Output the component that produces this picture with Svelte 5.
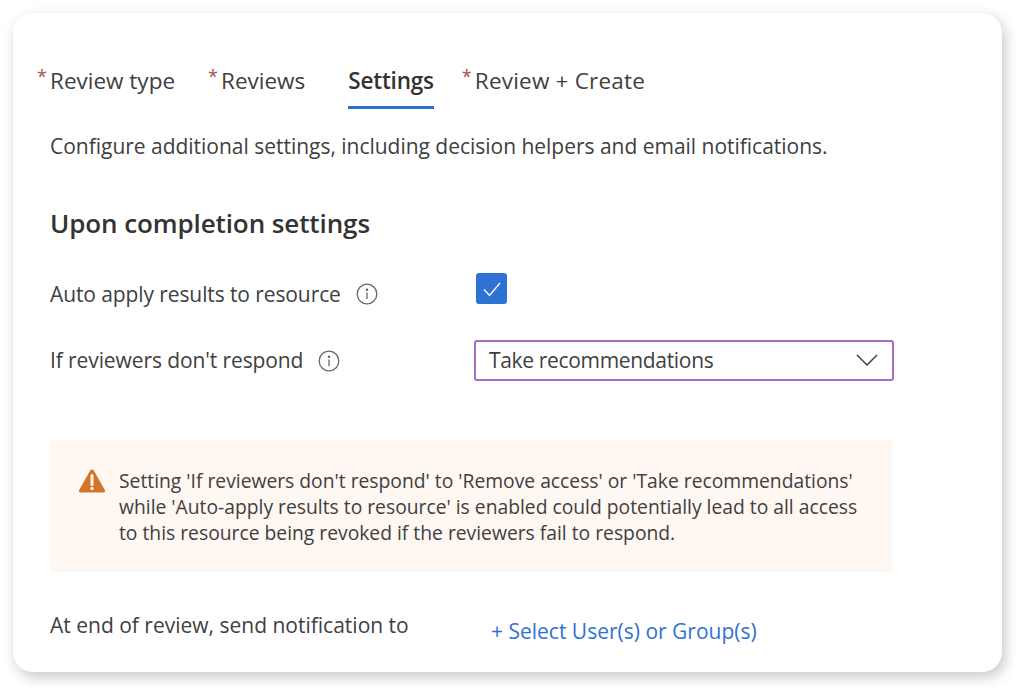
<script>
  const tabs = [
    { label: 'Review type', required: true },
    { label: 'Reviews', required: true },
    { label: 'Settings', active: true },
    { label: 'Review + Create', required: true }
  ];
</script>

<div class="page">
  <div class="card">
    <nav class="tabs">
      {#each tabs as tab}
        <div class="tab" class:active={tab.active} class:required={tab.required}>
          {#if tab.required}<span class="star">*</span>{/if}
          <span class="tab-label">{tab.label}</span>
        </div>
      {/each}
    </nav>

    <p class="intro">Configure additional settings, including decision helpers and email notifications.</p>

    <h2>Upon completion settings</h2>

    <div class="row first">
      <div class="label">
        Auto apply results to resource
        <svg class="info" viewBox="0 0 22 22" width="22" height="22" fill="none" stroke="#666" stroke-width="1.3">
          <circle cx="11" cy="11" r="9.800" />
          <path d="M11 9.500v6.500" />
          <circle cx="11" cy="6.700" r="0.600" fill="#666" />
        </svg>
      </div>
      <div class="checkbox">
        <svg viewBox="0 0 20 20" width="20" height="20" fill="none" stroke="#fff" stroke-width="1.3">
          <path d="M2 10.500l5.500 6L18 4" />
        </svg>
      </div>
    </div>

    <div class="row second">
      <div class="label">
        If reviewers don't respond
        <svg class="info" viewBox="0 0 22 22" width="22" height="22" fill="none" stroke="#666" stroke-width="1.3">
          <circle cx="11" cy="11" r="9.800" />
          <path d="M11 9.500v6.500" />
          <circle cx="11" cy="6.700" r="0.600" fill="#666" />
        </svg>
      </div>
      <div class="select">
        <span>Take recommendations</span>
        <svg viewBox="0 0 22 12" width="22" height="12" fill="none" stroke="#444" stroke-width="1.500">
          <path d="M1 1l10 10L21 1" />
        </svg>
      </div>
    </div>

    <div class="warning">
      <svg viewBox="0 0 28 25" width="28" height="25">
        <path d="M14 1.500c.8 0 1.400.4 1.800 1l11 19.500c.7 1.300 0 2.500-1.500 2.500H2.700c-1.500 0-2.200-1.200-1.500-2.500l11-19.500c.4-.6 1-1 1.800-1z" fill="#d2742a" />
        <path d="M14 7.500v9" stroke="#fff8f2" stroke-width="3" stroke-linecap="round" />
        <circle cx="14" cy="20.500" r="1.700" fill="#fff8f2" />
      </svg>
      <p>Setting 'If reviewers don't respond' to 'Remove access' or 'Take recommendations' while 'Auto-apply results to resource' is enabled could potentially lead to all access to this resource being revoked if the reviewers fail to respond.</p>
    </div>

    <div class="row last">
      <div class="label end">At end of review, send notification to</div>
      <a class="link" href="#top">+ Select User(s) or Group(s)</a>
    </div>
  </div>
</div>

<style>
  :global(body) {
    margin: 0;
    background: #fff;
  }

  .page {
    padding: 13px 22px 23px 13px;
    height: 695px;
    box-sizing: border-box;
    font-family: "Open Sans", "Noto Sans", sans-serif;
    color: #404040;
  }

  .card {
    height: 659px;
    box-sizing: border-box;
    padding: 52px 0 0 37px;
    background: #fff;
    border-radius: 20px;
    box-shadow: 3px 5px 14px rgba(0, 0, 0, 0.22);
    overflow: hidden;
  }

  .tabs {
    display: flex;
    height: 65px;
    margin-left: -13px;
  }

  .tab {
    position: relative;
    font-size: 22.500px;
    line-height: 32px;
    white-space: nowrap;
    height: 44px;
  }

  .tab:nth-child(1) { margin-right: 33px; }
  .tab:nth-child(2) { margin-right: 43px; }
  .tab:nth-child(3) { margin-right: 28px; }
  .tab:nth-child(4) { letter-spacing: 0.2px; }

  .tab.required {
    padding-left: 13px;
  }

  .star {
    position: absolute;
    left: 0;
    top: -5px;
    color: #a8504a;
    font-size: 18px;
  }

  .tab.active {
    font-weight: 600;
    color: #333;
    letter-spacing: -0.2px;
    border-bottom: 3px solid #2a6fd0;
    height: 41px;
  }

  .intro {
    margin: 0;
    font-size: 21px;
    line-height: 32px;
    letter-spacing: -0.02px;
    white-space: nowrap;
  }

  h2 {
    margin: 44px 0 0;
    font-size: 26px;
    line-height: 34px;
    font-weight: 600;
    color: #333;
    letter-spacing: -0.1px;
  }

  .row {
    display: grid;
    grid-template-columns: 424px 420px;
    align-items: center;
  }

  .row.first {
    margin-top: 33px;
    height: 36px;
  }

  .row.second {
    margin-top: 30px;
    height: 42px;
  }

  .row.last {
    margin-top: 33px;
    height: 32px;
  }

  .label {
    display: flex;
    align-items: center;
    gap: 15px;
    font-size: 21px;
    letter-spacing: -0.1px;
    white-space: nowrap;
  }

  .label.end {
    letter-spacing: 0;
  }

  .info {
    flex: none;
    margin-top: 1px;
  }

  .checkbox {
    margin-left: 2px;
    margin-bottom: 10px;
    width: 31px;
    height: 31px;
    display: flex;
    align-items: center;
    justify-content: center;
    background: #2f73d2;
    border-radius: 3px;
  }

  .select {
    display: flex;
    align-items: center;
    justify-content: space-between;
    box-sizing: border-box;
    height: 41px;
    padding: 0 14px 0 13px;
    border: 2px solid #a56cc6;
    border-radius: 3px;
    font-size: 21px;
    letter-spacing: -0.33px;
  }

  .warning {
    display: flex;
    gap: 13px;
    box-sizing: border-box;
    width: 842px;
    height: 132px;
    margin-top: 59px;
    padding: 28px 28px 0 28px;
    background: #fff7f1;
  }

  .warning svg {
    flex: none;
  }

  .warning p {
    margin: 0;
    font-size: 19.300px;
    line-height: 26px;
  }

  .link {
    padding-left: 17px;
    margin-top: 12px;
    color: #2f73d2;
    font-size: 21px;
    text-decoration: none;
  }
</style>
